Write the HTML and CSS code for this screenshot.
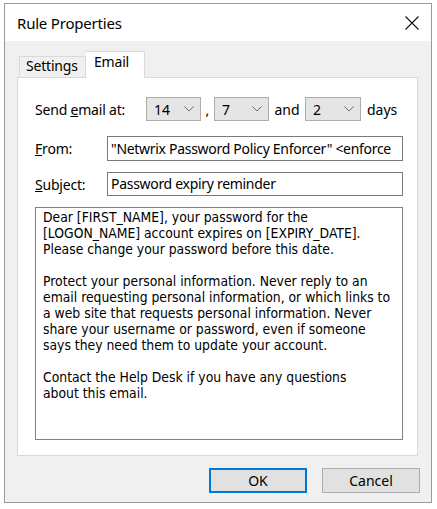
FILE: index.html
```html
<!DOCTYPE html>
<html>
<head>
<meta charset="utf-8">
<link rel="stylesheet" href="styles.css">
</head>
<body>
<div class="dialog">
  <div class="titlebar">
    <span class="title">Rule Properties</span>
    <svg class="close" width="14" height="14" viewBox="0 0 14 14"><path d="M0.5 0.5L13.5 13.5M13.5 0.5L0.5 13.5" stroke="#111" stroke-width="1.1" fill="none"/></svg>
  </div>
  <div class="client">
    <div class="tabs">
      <div class="tab">Settings</div>
      <div class="tab active">Email</div>
    </div>
    <div class="panel">
      <div class="row send">
        <span class="label lw1">Send <u>e</u>mail at:</span>
        <div class="combo"><span>14</span><svg class="chev" width="10" height="6" viewBox="0 0 10 6"><path d="M0.5 0.5L5 5L9.5 0.5" stroke="#6d6d6d" stroke-width="1" fill="none"/></svg></div>
        <span class="sep comma">,</span>
        <div class="combo"><span>7</span><svg class="chev" width="10" height="6" viewBox="0 0 10 6"><path d="M0.5 0.5L5 5L9.5 0.5" stroke="#6d6d6d" stroke-width="1" fill="none"/></svg></div>
        <span class="sep and">and</span>
        <div class="combo c3"><span>2</span><svg class="chev" width="10" height="6" viewBox="0 0 10 6"><path d="M0.5 0.5L5 5L9.5 0.5" stroke="#6d6d6d" stroke-width="1" fill="none"/></svg></div>
        <span class="sep days">days</span>
      </div>
      <div class="row from">
        <span class="label lw2"><u>F</u>rom:</span>
        <div class="input">"Netwrix Password Policy Enforcer" &lt;enforce</div>
      </div>
      <div class="row subject">
        <span class="label lw2"><u>S</u>ubject:</span>
        <div class="input">Password expiry reminder</div>
      </div>
      <div class="body-text">
        <p>Dear [FIRST_NAME], your password for the<br>[LOGON_NAME] account expires on [EXPIRY_DATE].<br>Please change your password before this date.</p>
        <p>Protect your personal information. Never reply to an<br>email requesting personal information, or which links to<br>a web site that requests personal information. Never<br>share your username or password, even if someone<br>says they need them to update your account.</p>
        <p>Contact the Help Desk if you have any questions<br>about this email.</p>
      </div>
    </div>
    <div class="buttons">
      <div class="btn default">OK</div>
      <div class="btn">Cancel</div>
    </div>
  </div>
</div>
</body>
</html>
```
FILE: styles.css
```css
* { box-sizing: border-box; }
html, body { margin: 0; padding: 0; background: #ffffff; }
body {
  font-family: "Noto Sans", "Open Sans", sans-serif;
  font-size: 14px;
  color: #000;
}
.dialog {
  margin: 3px 0 0 4px;
  width: 428px;
  height: 500px;
  border: 1px solid #9a9a9a;
  display: flex;
  flex-direction: column;
}
.titlebar {
  height: 37px;
  background: #fff;
  display: flex;
  align-items: center;
  justify-content: space-between;
  padding: 0 12px 0 12px;
}
.title { font-size: 15px; letter-spacing: -0.2px; }
.client {
  flex: 1;
  background: #f0f0f0;
  padding: 10px 0 0 12px;
  display: flex;
  flex-direction: column;
}
.tabs {
  display: flex;
  align-items: flex-end;
  height: 26px;
  padding-left: 2px;
  position: relative;
  z-index: 1;
}
.tab {
  height: 21px;
  width: 67px;
  border: 1px solid #d9d9d9;
  border-bottom: none;
  background: #f0f0f0;
  padding-left: 6px;
  line-height: 17px;
  letter-spacing: -0.2px;
}
.tab.active {
  width: 59px;
  background: #fff;
  border-left: none;
  padding-left: 8px;
  line-height: 20px;
  margin-bottom: -1px;
  height: 27px;
}
.panel {
  width: 401px;
  height: 379px;
  background: #fff;
  border: 1px solid #d9d9d9;
  padding: 19px 14px 15px 17px;
  display: flex;
  flex-direction: column;
}
.row { display: flex; align-items: center; }
.label { letter-spacing: -0.2px; }
.lw1 { width: 111px; }
.lw2 { width: 72px; }
.send { height: 24px; }
.combo {
  width: 55px;
  height: 24px;
  background: #e5e5e5;
  border: 1px solid #adadad;
  display: flex;
  align-items: center;
  justify-content: space-between;
  padding: 0 6px 0 7px;
}
.combo.c3 { width: 56px; }
.sep { text-align: center; }
.comma { width: 13px; }
.and { width: 36px; }
.days { margin-left: 6px; }
.from { margin-top: 15px; }
.subject { margin-top: 11px; }
.input {
  width: 296px;
  height: 25px;
  border: 1px solid #7a7a7a;
  background: #fff;
  padding: 0 3px 0 3px;
  line-height: 23px;
  white-space: nowrap;
  overflow: hidden;
  letter-spacing: -0.3px;
}
.subject .input { height: 24px; line-height: 22px; }
.body-text {
  margin-top: 11px;
  flex: 1;
  border: 1px solid #828282;
  padding: 1px 4px 0 7px;
  font-family: "DejaVu Sans Condensed", "DejaVu Sans", sans-serif;
  font-stretch: condensed;
  font-size: 13.8px;
  line-height: 16px;
}
.body-text p { margin: 0 0 16px 0; }
.buttons {
  display: flex;
  justify-content: flex-end;
  gap: 15px;
  padding-right: 11px;
  margin-top: 12px;
}
.btn {
  width: 98px;
  height: 25px;
  background: #e1e1e1;
  border: 1px solid #adadad;
  display: flex;
  align-items: center;
  justify-content: center;
}
.btn.default { border: 2px solid #0078d7; }
```
